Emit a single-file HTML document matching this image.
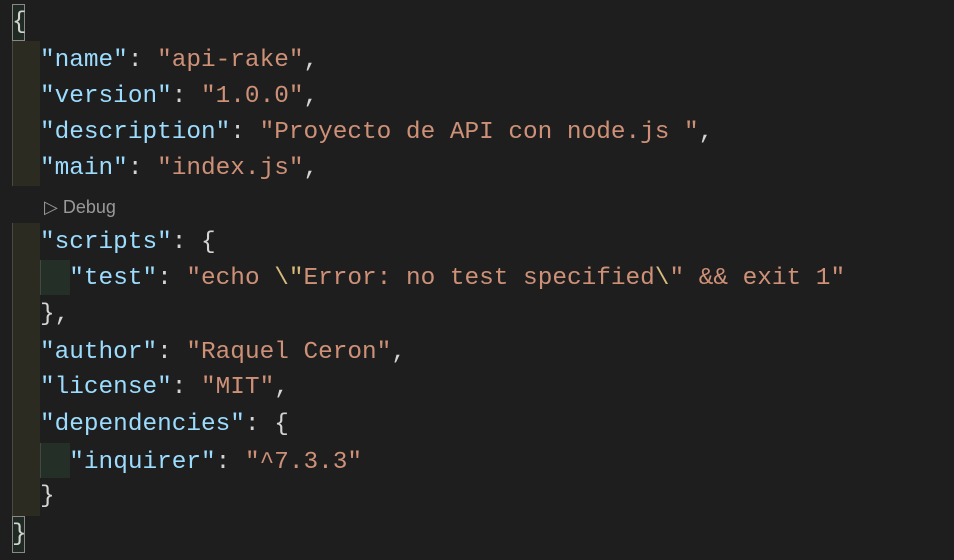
<!DOCTYPE html>
<html><head><style>
body{margin:0;background:#1e1e1e;width:954px;height:560px;overflow:hidden;position:relative}
.l{position:absolute;left:40px;font-family:"Liberation Mono",monospace;font-size:24.4px;line-height:36px;color:#d4d4d4;white-space:pre;margin-top:3px}
.k{color:#9cdcfe}.s{color:#ce9178}.e{color:#d7ba7d}
.g{position:absolute;background:#2b2b22;border-left:1px solid #4a4a40}
.ig{position:absolute;background:#243027;border-left:1px solid #3f4a40}
.b{position:absolute;border:1px solid #888;background:#1f2a22}
</style></head><body>
<div class="g" style="left:12px;top:41px;width:27px;height:145px"></div>
<div class="g" style="left:12px;top:223px;width:27px;height:293px"></div>
<div class="ig" style="left:40px;top:260px;width:29px;height:35px"></div>
<div class="ig" style="left:40px;top:443px;width:29px;height:35px"></div>
<div class="b" style="left:12px;top:4px;width:11px;height:35px"></div>
<div class="b" style="left:12px;top:516px;width:11px;height:35px"></div>
<div class="l" style="left:12px;top:2px">{</div>
<div class="l" style="top:40px"><span class="k">"name"</span>: <span class="s">"api-rake"</span>,</div>
<div class="l" style="top:76px"><span class="k">"version"</span>: <span class="s">"1.0.0"</span>,</div>
<div class="l" style="top:112px"><span class="k">"description"</span>: <span class="s">"Proyecto de API con node.js "</span>,</div>
<div class="l" style="top:148px"><span class="k">"main"</span>: <span class="s">"index.js"</span>,</div>
<div style="position:absolute;left:44px;top:197px;font-family:'Liberation Sans',sans-serif;font-size:18px;color:#999">▷ Debug</div>
<div class="l" style="top:222px"><span class="k">"scripts"</span>: {</div>
<div class="l" style="top:258px">  <span class="k">"test"</span>: <span class="s">"echo <span class="e">\"</span>Error: no test specified<span class="e">\</span>" &amp;&amp; exit 1"</span></div>
<div class="l" style="top:294px">},</div>
<div class="l" style="top:332px"><span class="k">"author"</span>: <span class="s">"Raquel Ceron"</span>,</div>
<div class="l" style="top:367px"><span class="k">"license"</span>: <span class="s">"MIT"</span>,</div>
<div class="l" style="top:404px"><span class="k">"dependencies"</span>: {</div>
<div class="l" style="top:442px">  <span class="k">"inquirer"</span>: <span class="s">"^7.3.3"</span></div>
<div class="l" style="top:476px">}</div>
<div class="l" style="left:12px;top:514px">}</div>
</body></html>
